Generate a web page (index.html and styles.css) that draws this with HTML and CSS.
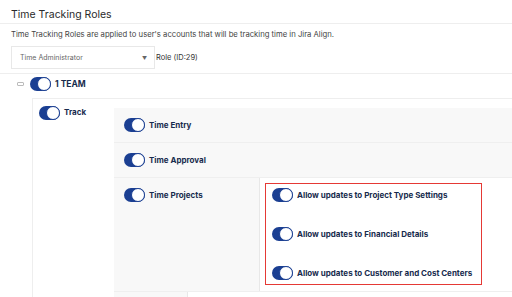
FILE: index.html
```html
<!DOCTYPE html>
<html>
<head>
<meta charset="utf-8">
<link rel="stylesheet" href="styles.css">
</head>
<body>
<div class="title">Time Tracking Roles</div>
<div class="desc">Time Tracking Roles are applied to user's accounts that will be tracking time in Jira Align.</div>
<div class="role-line">
  <div class="select"><span>Time Administrator</span><span class="caret">▼</span></div>
  <span class="role-id">Role (ID:29)</span>
</div>
<div class="team">
  <span class="minus"></span>
  <span class="toggle"><span class="knob"></span></span>
  <span class="label">1 TEAM</span>
</div>
<div class="track">
  <div class="track-head">
    <span class="toggle"><span class="knob"></span></span>
    <span class="label">Track</span>
  </div>
  <div class="panel">
    <div class="row">
      <div class="item"><span class="toggle"><span class="knob"></span></span><span class="label">Time Entry</span></div>
    </div>
    <div class="row">
      <div class="item"><span class="toggle"><span class="knob"></span></span><span class="label">Time Approval</span></div>
    </div>
    <div class="row split">
      <div class="cell-left">
        <div class="item top"><span class="toggle"><span class="knob"></span></span><span class="label">Time Projects</span></div>
      </div>
      <div class="cell-right">
        <div class="redbox">
          <div class="sub"><span class="toggle"><span class="knob"></span></span><span class="label">Allow updates to Project Type Settings</span></div>
          <div class="sub"><span class="toggle"><span class="knob"></span></span><span class="label">Allow updates to Financial Details</span></div>
          <div class="sub"><span class="toggle"><span class="knob"></span></span><span class="label">Allow updates to Customer and Cost Centers</span></div>
        </div>
      </div>
    </div>
    <div class="row last">
      <div class="cell-small"></div>
      <div class="cell-rest"></div>
    </div>
  </div>
</div>
</body>
</html>
```
FILE: styles.css
```css
* { box-sizing: border-box; }
body {
  margin: 0;
  font-family: Inter, "Noto Sans", sans-serif;
  color: #172b4d;
  background: #fff;
  overflow: hidden;
  height: 297px;
}
.title {
  font-size: 10.5px;
  color: #2a2a2a;
  padding: 8px 0 0 11px;
  height: 24px;
  border-bottom: 1px solid #eee;
}
.desc {
  font-size: 7.7px;
  color: #444;
  padding: 6px 0 0 11px;
  height: 22px;
}
.role-line {
  display: flex;
  padding: 0 0 0 11px;
  height: 28px;
  border-bottom: 1px solid #eee;
  align-items: flex-start;
}
.select {
  width: 144px;
  height: 23px;
  border: 1px solid #e8e8e8;
  display: flex;
  align-items: center;
  justify-content: space-between;
  padding: 0 7px 0 8px;
  font-size: 7px;
  color: #666;
}
.caret { font-size: 5px; color: #666; }
.role-id {
  font-size: 7.5px;
  color: #333;
  margin-left: 1px;
  line-height: 23px;
}
.team {
  display: flex;
  align-items: center;
  height: 24px;
  padding: 0 0 4px 17px;
}
.minus {
  width: 7px;
  height: 4px;
  border: 1px solid #bbb;
  border-radius: 1px;
  margin-right: 6px;
}
.toggle {
  position: relative;
  width: 21px;
  height: 14px;
  border-radius: 7px;
  background: #1b3f92;
  flex: none;
}
.knob {
  position: absolute;
  right: 0;
  top: 0;
  width: 14px;
  height: 14px;
  border-radius: 50%;
  background: #fff;
  border: 1px solid #1b3f92;
}
.label {
  font-weight: 700;
  font-size: 8px;
  color: #172b4d;
  margin-left: 4px;
  white-space: nowrap;
}
.team .label { font-size: 8.5px; }
.track {
  margin-left: 32px;
  border-left: 1px solid #eee;
  border-top: 1px solid #eee;
  display: flex;
}
.track-head {
  width: 81px;
  flex: none;
  display: flex;
  align-items: flex-start;
  padding: 7px 0 0 6px;
}
.track-head .label { margin-top: 1px; }
.panel {
  flex: 1;
  margin-top: 9px;
  display: flex;
  flex-direction: column;
}
.row {
  flex: none;
  background: #f8f8f8;
  height: 35px;
  border-bottom: 1px solid #efefef;
  display: flex;
}
.item {
  display: flex;
  align-items: center;
  padding-left: 10px;
  height: 100%;
}
.item.top { height: auto; padding-top: 10px; }
.row.split { height: 114px; background: #fff; }
.cell-left {
  width: 146px;
  background: #f8f8f8;
  border-right: 1px solid #e8e8e8;
}
.cell-right {
  flex: 1;
  padding: 5px 0 0 5px;
}
.redbox {
  width: 217px;
  height: 102px;
  border: 1px solid #e53935;
  padding: 4px 0 0 6px;
  display: flex;
  flex-direction: column;
  gap: 25px;
}
.sub {
  display: flex;
  align-items: center;
  height: 14px;
}
.row.last { background: #fff; height: 5px; border-bottom: none; }
.cell-small { width: 74px; background: #f8f8f8; border-right: 1px solid #e8e8e8; }
.cell-rest { flex: 1; }
```
